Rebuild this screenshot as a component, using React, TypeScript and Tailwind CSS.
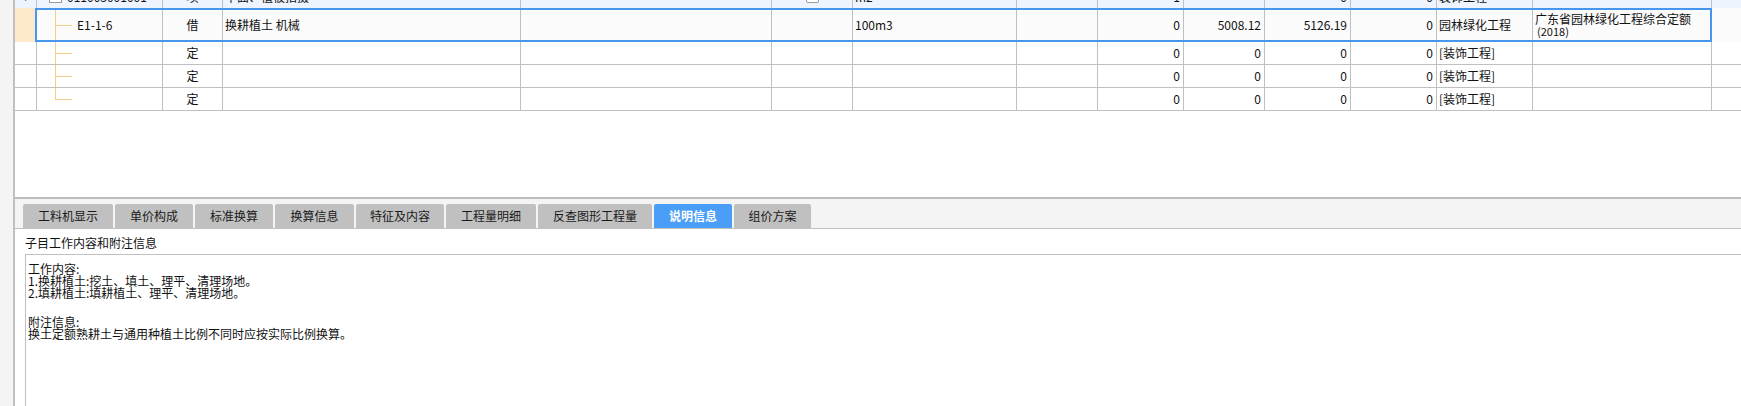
import React from "react";

const GRID =
  "grid grid-cols-[22px_126px_60px_298px_251px_81px_164px_81px_86px_81px_86px_86px_96px_179px]";

const C = "border-r border-[#c0c0c0] flex items-center overflow-hidden whitespace-nowrap";
const NUM = "border-r border-[#c0c0c0] flex items-center justify-end pr-[3px] overflow-hidden whitespace-nowrap";
const LEFT = "border-r border-[#c0c0c0] flex items-center pl-[2px] overflow-hidden whitespace-nowrap";
const MID = "border-r border-[#c0c0c0] flex items-center justify-center overflow-hidden whitespace-nowrap";

function TreeCell({ last, text }: { last?: boolean; text?: string }) {
  return (
    <div className="flex h-full border-r border-[#c0c0c0]">
      <div className="w-[18px] shrink-0" />
      <div className="flex w-[17px] shrink-0 flex-col">
        <div className="flex-1 border-b border-l border-[#f9cd86]" />
        <div className={last ? "flex-1" : "flex-1 border-l border-[#f9cd86]"} />
      </div>
      {text ? <span className="self-center pl-[5px]">{text}</span> : null}
    </div>
  );
}

function ChildRow({ last }: { last?: boolean }) {
  return (
    <div className={`${GRID} h-[23px] border-b border-[#c0c0c0] bg-white`}>
      <div className={C} />
      <TreeCell last={last} />
      <div className={MID}>定</div>
      <div className={C} />
      <div className={C} />
      <div className={C} />
      <div className={C} />
      <div className={C} />
      <div className={NUM}>0</div>
      <div className={NUM}>0</div>
      <div className={NUM}>0</div>
      <div className={NUM}>0</div>
      <div className={LEFT}>[装饰工程]</div>
      <div className={C} />
    </div>
  );
}

const tabs = [
  { label: "工料机显示", w: "w-[90px]" },
  { label: "单价构成", w: "w-[78px]" },
  { label: "标准换算", w: "w-[78px]" },
  { label: "换算信息", w: "w-[79px]" },
  { label: "特征及内容", w: "w-[88px]" },
  { label: "工程量明细", w: "w-[90px]" },
  { label: "反查图形工程量", w: "w-[114px]" },
  { label: "说明信息", w: "w-[78px]", active: true },
  { label: "组价方案", w: "w-[77px]" },
];

export default function App() {
  return (
    <div className="flex h-[406px] w-[1741px] overflow-hidden bg-white text-[12px] text-[#111] font-['Noto_Sans_CJK_SC',sans-serif]">
      <div className="w-[13px] shrink-0 bg-[#f4f4f4]" />
      <div className="w-[2px] shrink-0 bg-[#c0c0c0]" />
      <div className="flex min-w-0 flex-1 flex-col">
        {/* table */}
        <div className="h-[197px] shrink-0 overflow-hidden bg-white">
          <div className="-mt-[15px]">
            {/* partially visible parent row */}
            <div className={`${GRID} h-[23px] bg-[#edf4fe]`}>
              <div className={MID}>+</div>
              <div className="flex items-center border-r border-[#c0c0c0] overflow-hidden whitespace-nowrap">
                <div className="w-[12px] shrink-0" />
                <div className="h-[13px] w-[13px] shrink-0 border border-[#9a9a9a] bg-white" />
                <span className="pl-[5px]">011003001001</span>
              </div>
              <div className={MID}>项</div>
              <div className={LEFT}>平面、植被拍摄</div>
              <div className={C} />
              <div className={MID}>
                <div className="h-[13px] w-[13px] rounded-[2px] border border-[#9a9a9a] bg-white" />
              </div>
              <div className={LEFT}>m2</div>
              <div className={C} />
              <div className={NUM}>1</div>
              <div className={C} />
              <div className={NUM}>0</div>
              <div className={NUM}>0</div>
              <div className={LEFT}>装饰工程</div>
              <div className={C} />
            </div>

            {/* selected row */}
            <div className="relative">
              <div className={`${GRID} h-[34px] bg-[#fbfbfb]`}>
                <div className="border-r border-[#c0c0c0] bg-[#fde8c9]" />
                <TreeCell text="E1-1-6" />
                <div className={MID}>借</div>
                <div className={LEFT}>换耕植土 机械</div>
                <div className={C} />
                <div className={C} />
                <div className={LEFT}>100m3</div>
                <div className={C} />
                <div className={NUM}>0</div>
                <div className={NUM}>5008.12</div>
                <div className={NUM}>5126.19</div>
                <div className={NUM}>0</div>
                <div className={LEFT}>园林绿化工程</div>
                <div className="flex items-center overflow-hidden border-r border-[#c0c0c0] pl-[2px] leading-[13px]">
                  <div>
                    <div className="whitespace-nowrap">广东省园林绿化工程综合定额</div>
                    <div className="pl-[2px] text-[11px]">(2018)</div>
                  </div>
                </div>
              </div>
              <div className="pointer-events-none absolute left-[20px] top-0 h-[34px] w-[1677px] border-2 border-[#4796ee]" />
            </div>

            <ChildRow />
            <ChildRow />
            <ChildRow last />
          </div>
        </div>

        <div className="h-[2px] shrink-0 bg-[#bdbdbd]" />

        {/* tab strip */}
        <div className="flex h-[30px] shrink-0 items-end gap-[2px] border-b border-[#c0c0c0] bg-[#f4f4f4] pl-[8px]">
          {tabs.map((t) => (
            <div
              key={t.label}
              className={`${t.w} flex h-[24px] items-center justify-center rounded-t-[2px] ${
                t.active ? "bg-[#4a9ef7] font-bold text-white" : "bg-[#c0c0c0] text-[#1a1a1a]"
              }`}
            >
              {t.label}
            </div>
          ))}
        </div>

        {/* label */}
        <div className="flex h-[25px] shrink-0 items-center pl-[10px] pt-[3px]">子目工作内容和附注信息</div>

        {/* text box */}
        <div className="ml-[10px] flex-1 border-l border-t border-[#c0c0c0] bg-white pl-[2px] pt-[8px] leading-[12px]">
          <div>工作内容:</div>
          <div>1.换耕植土:挖土、填土、理平、清理场地。</div>
          <div>2.填耕植土:填耕植土、理平、清理场地。</div>
          <div className="h-[17px]" />
          <div>附注信息:</div>
          <div>换土定额熟耕土与通用种植土比例不同时应按实际比例换算。</div>
        </div>
      </div>
    </div>
  );
}
